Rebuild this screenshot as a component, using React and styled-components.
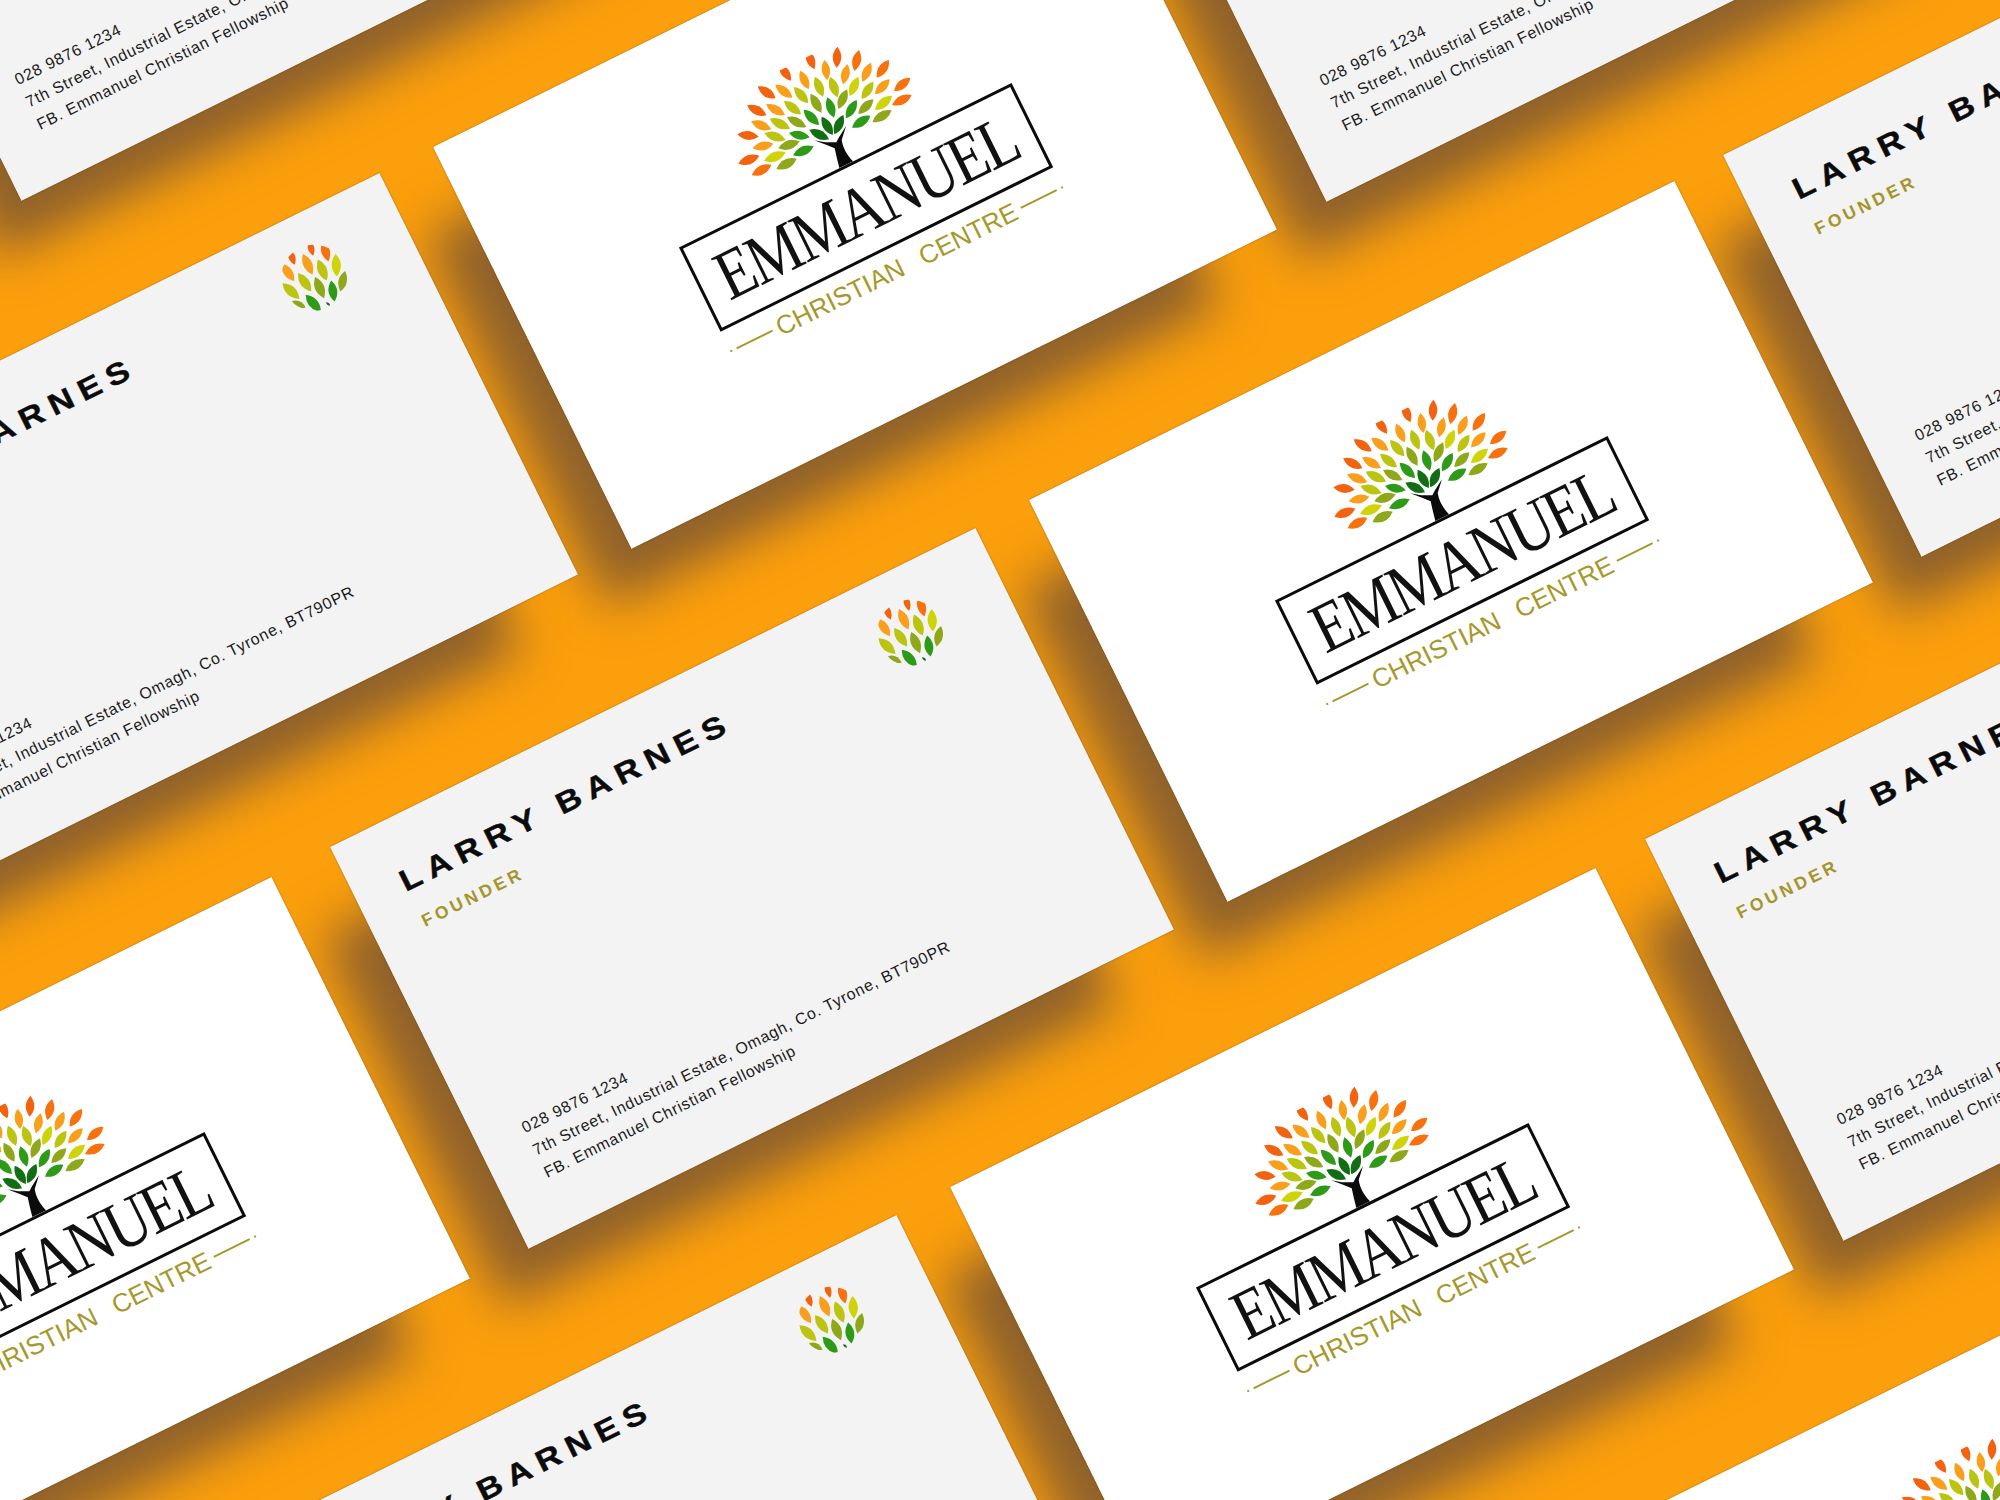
import React from "react";
import styled, { createGlobalStyle } from "styled-components";

const ANGLE = -26.3;
const CARD_W = 720;
const CARD_H = 448;

const RED = "#f2620f";
const DEEP = "#f7710f";
const AMBER = "#f99f1c";
const LIME = "#bcc412";
const OLIVE = "#8ea81a";
const GREEN = "#2d9a18";
const DARK = "#126e12";
const YELLOW = "#cfd30a";

// the cards on the table, top left corner of each in page pixels
const CARDS = [
  { id: "a", kind: "info", x: -177, y: -201 },
  { id: "b", kind: "brand", x: 433, y: 147 },
  { id: "c", kind: "info", x: 1128, y: -200 },
  { id: "d", kind: "info", x: 1723, y: 155 },
  { id: "e", kind: "info", x: -266, y: 492 },
  { id: "f", kind: "info", x: 330, y: 847 },
  { id: "g", kind: "brand", x: 1029, y: 500 },
  { id: "h", kind: "info", x: 1645, y: 839 },
  { id: "i", kind: "brand", x: -374, y: 1196 },
  { id: "j", kind: "info", x: 251, y: 1534 },
  { id: "k", kind: "brand", x: 950, y: 1187 },
  { id: "l", kind: "brand", x: 1588, y: 1539 },
];

// leaf ends, measured with the tree as it sits in the photo (x1, y1, x2, y2, colour)
const TREE_LEAVES = [
  [435, 95, 458, 153, RED],
  [527, 85, 525, 148, RED],
  [592, 95, 578, 158, DEEP],
  [352, 137, 388, 187, RED],
  [488, 125, 497, 185, AMBER],
  [558, 138, 544, 198, AMBER],
  [628, 133, 602, 190, AMBER],
  [682, 125, 645, 178, DEEP],
  [415, 157, 441, 213, AMBER],
  [746, 178, 697, 218, DEEP],
  [288, 204, 342, 240, RED],
  [341, 199, 392, 238, AMBER],
  [460, 175, 484, 235, LIME],
  [505, 175, 528, 237, LIME],
  [590, 175, 564, 233, YELLOW],
  [635, 190, 600, 242, LIME],
  [684, 183, 640, 228, AMBER],
  [397, 206, 440, 255, LIME],
  [447, 226, 479, 283, OLIVE],
  [556, 213, 530, 272, OLIVE],
  [497, 237, 517, 298, GREEN],
  [585, 245, 553, 300, GREEN],
  [635, 243, 590, 287, OLIVE],
  [691, 232, 640, 275, YELLOW],
  [750, 230, 691, 260, DEEP],
  [256, 261, 314, 291, RED],
  [313, 258, 370, 290, AMBER],
  [367, 248, 418, 288, LIME],
  [426, 274, 472, 320, GREEN],
  [480, 295, 513, 350, DARK],
  [545, 290, 518, 348, DARK],
  [626, 292, 571, 328, GREEN],
  [690, 276, 632, 311, OLIVE],
  [268, 309, 329, 333, AMBER],
  [324, 301, 385, 331, LIME],
  [376, 296, 434, 326, OLIVE],
  [443, 334, 502, 363, DARK],
  [382, 344, 444, 357, GREEN],
  [308, 344, 372, 365, LIME],
  [227, 348, 291, 355, RED],
  [273, 390, 335, 376, AMBER],
  [350, 390, 414, 369, OLIVE],
  [394, 411, 456, 384, GREEN],
  [307, 428, 372, 402, YELLOW],
  [344, 452, 405, 421, OLIVE],
  [230, 436, 293, 412, RED],
  [270, 471, 329, 439, DEEP],
];

const BADGE_LEAVES = [
  [80, 75, 98, 122, RED],
  [140, 50, 152, 95, RED],
  [180, 52, 197, 112, DEEP],
  [60, 118, 96, 170, AMBER],
  [122, 90, 150, 150, AMBER],
  [166, 106, 192, 168, LIME],
  [218, 90, 222, 156, YELLOW],
  [108, 146, 146, 200, LIME],
  [62, 176, 112, 222, LIME],
  [158, 158, 184, 220, OLIVE],
  [246, 140, 232, 200, OLIVE],
  [205, 168, 215, 230, GREEN],
  [130, 210, 175, 260, GREEN],
  [90, 228, 130, 248, OLIVE],
  [190, 232, 202, 242, DARK],
];

const leafPath = ([x1, y1, x2, y2]) => {
  const mx = (x1 + x2) / 2;
  const my = (y1 + y2) / 2;
  const nx = -(y2 - y1) * 0.41;
  const ny = (x2 - x1) * 0.41;
  return `M${x1} ${y1}Q${mx + nx} ${my + ny} ${x2} ${y2}Q${mx - nx} ${my - ny} ${x1} ${y1}Z`;
};

const GlobalStyle = createGlobalStyle`
  html, body {
    margin: 0;
    padding: 0;
    background: #fb9f0c;
  }
`;

const Table = styled.main`
  position: relative;
  width: 2000px;
  height: 1500px;
  overflow: hidden;
  background: #fb9f0c;
`;

const placed = (p) => `
  position: absolute;
  left: ${p.$x}px;
  top: ${p.$y}px;
  width: ${CARD_W}px;
  height: ${CARD_H}px;
  transform-origin: 0 0;
  transform: rotate(${ANGLE}deg);
`;

const CardShadow = styled.div`
  ${placed}
  box-shadow: -65px 60px 50px -18px rgba(50, 44, 71, 0.54);
`;

const Card = styled.article`
  ${placed}
  box-sizing: border-box;
  display: flex;
  flex-direction: column;
  box-shadow: 0 0 1.5px rgba(90, 50, 0, 0.7);
  font-family: "Liberation Sans", Arial, sans-serif;
`;

const BrandFace = styled(Card)`
  align-items: center;
  padding: 85px 0 0 3px;
  background: #fff;
`;

const InfoFace = styled(Card)`
  padding: 32px 72px 48px 48px;
  background: #f3f3f3;
`;

const TreeArt = styled.svg`
  display: block;
  width: 200px;
  height: 117px;
  margin-bottom: -3px;
`;

const Frame = styled.div`
  box-sizing: border-box;
  display: flex;
  align-items: center;
  justify-content: center;
  width: 371px;
  height: 94px;
  border: 3px solid #0b0b0b;
`;

const WordMark = styled.span`
  display: inline-block;
  font-family: "Liberation Serif", "Times New Roman", serif;
  font-size: 60px;
  line-height: 1;
  letter-spacing: -2.4px;
  color: #111;
  transform: scaleY(1.18);
`;

const Tagline = styled.div`
  display: flex;
  align-items: center;
  width: 371px;
  margin-top: 8px;
  color: #a8982c;
`;

const Dot = styled.i`
  flex: none;
  width: 2px;
  height: 2px;
  background: #a8982c;
`;

const Rule = styled.i`
  flex: 1;
  height: 1.5px;
  margin: 0 5px;
  background: #a8982c;
`;

const TagText = styled.span`
  font-size: 26px;
  line-height: 28px;
  font-weight: 400;
  word-spacing: 12px;
  white-space: nowrap;
`;

const CardHead = styled.header`
  display: flex;
  justify-content: space-between;
  align-items: flex-start;
`;

const NameBlock = styled.div`
  margin-top: 16px;
`;

const BadgeArt = styled.svg`
  display: block;
  flex: none;
  width: 66px;
  height: 66px;
`;

const Name = styled.h2`
  margin: 0;
  font-size: 30px;
  line-height: 32px;
  font-weight: 700;
  letter-spacing: 6.9px;
  color: #0b0b0b;
  -webkit-text-stroke: 0.4px #0b0b0b;
  white-space: nowrap;
  transform: scaleX(1.15);
  transform-origin: 0 50%;
`;

const Role = styled.p`
  margin: 19px 0 0 2px;
  font-size: 17.5px;
  line-height: 18px;
  font-weight: 700;
  letter-spacing: 3.6px;
  color: #a5952b;
`;

const Contact = styled.address`
  margin-top: auto;
  font-style: normal;
  font-size: 16px;
  line-height: 25px;
  letter-spacing: 0.77px;
  color: #1c1c1c;
  white-space: nowrap;
`;

const ContactLine = styled.div``;

const Tree = () => (
  <TreeArt viewBox="-300 -342 600 351" aria-hidden="true">
    <g transform={`rotate(${-ANGLE}) translate(-552 -440)`}>
      {TREE_LEAVES.map((leaf, i) => (
        <path key={i} d={leafPath(leaf)} fill={leaf[4]} />
      ))}
      <path
        d="M533 449L574 429C556 410 544 390 540 365L553 323L531 358L524 372L490 372L458 366L495 380L519 390C523 410 528 430 533 449Z"
        fill="#0b0b0b"
      />
    </g>
  </TreeArt>
);

const Badge = ({ clip }) => (
  <BadgeArt viewBox="-97 -97 194 194" aria-hidden="true">
    <defs>
      <clipPath id={clip}>
        <circle r="97" />
      </clipPath>
    </defs>
    <g clipPath={`url(#${clip})`}>
      <g transform={`rotate(${-ANGLE}) translate(-155 -160)`}>
        {BADGE_LEAVES.map((leaf, i) => (
          <path key={i} d={leafPath(leaf)} fill={leaf[4]} />
        ))}
      </g>
    </g>
  </BadgeArt>
);

const BrandCard = ({ x, y }) => (
  <BrandFace $x={x} $y={y}>
    <Tree />
    <Frame>
      <WordMark>EMMANUEL</WordMark>
    </Frame>
    <Tagline>
      <Dot />
      <Rule />
      <TagText>CHRISTIAN CENTRE</TagText>
      <Rule />
      <Dot />
    </Tagline>
  </BrandFace>
);

const InfoCard = ({ id, x, y }) => (
  <InfoFace $x={x} $y={y}>
    <CardHead>
      <NameBlock>
        <Name>LARRY BARNES</Name>
        <Role>FOUNDER</Role>
      </NameBlock>
      <Badge clip={`badge-${id}`} />
    </CardHead>
    <Contact>
      <ContactLine>028 9876 1234</ContactLine>
      <ContactLine>7th Street, Industrial Estate, Omagh, Co. Tyrone, BT790PR</ContactLine>
      <ContactLine>FB. Emmanuel Christian Fellowship</ContactLine>
    </Contact>
  </InfoFace>
);

const App = () => (
  <>
    <GlobalStyle />
    <Table>
      {CARDS.map((c) => (
        <CardShadow key={c.id} $x={c.x} $y={c.y} />
      ))}
      {CARDS.map((c) =>
        c.kind === "brand" ? (
          <BrandCard key={c.id} x={c.x} y={c.y} />
        ) : (
          <InfoCard key={c.id} id={c.id} x={c.x} y={c.y} />
        )
      )}
    </Table>
  </>
);

export default App;
